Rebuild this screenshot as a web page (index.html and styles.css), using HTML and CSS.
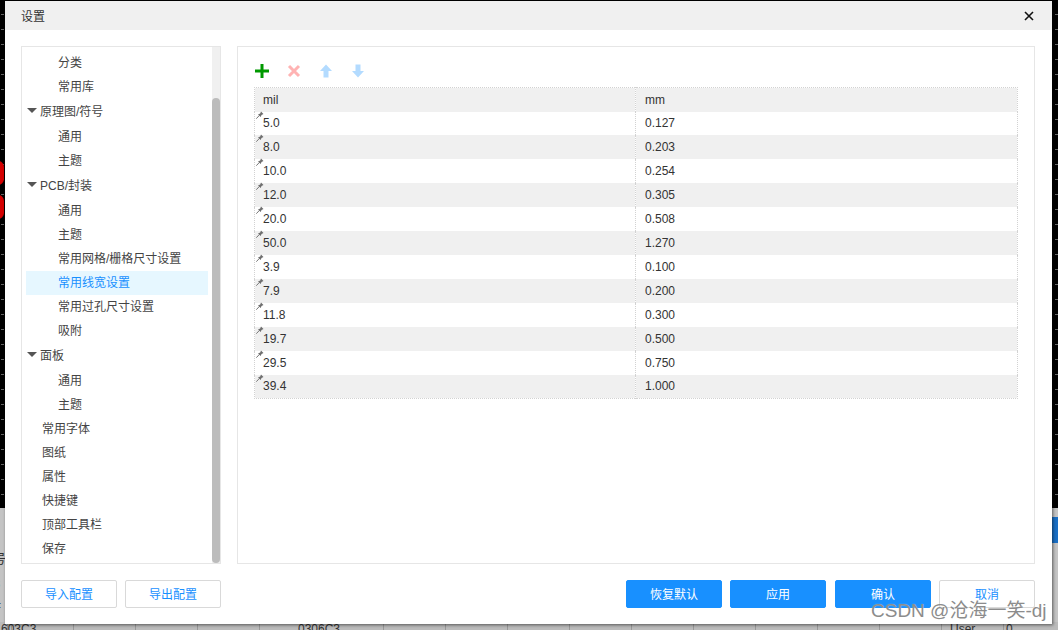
FILE: index.html
```html
<!DOCTYPE html>
<html lang="zh-CN">
<head>
<meta charset="utf-8">
<title>设置</title>
<link rel="stylesheet" href="styles.css">
</head>
<body>
<svg class="defs" width="0" height="0" aria-hidden="true">
  <symbol id="pin" viewBox="0 0 8 8">
    <path d="M0.3 7.7 L3.4 4.4" stroke="#777" stroke-width="1" fill="none"/>
    <path d="M2 3.4 L4.2 2.6 L5 0.6 L7.5 3 L5.5 3.9 L4.7 6 Z" fill="#6e6e6e"/>
  </symbol>
</svg>

<div class="backdrop">
  <div class="tick tick-l"></div>
  <div class="tick tick-r"></div>
  <div class="blob blob-a"></div>
  <div class="blob blob-b"></div>
  <div class="behind">
    <div class="blue-strip"></div>
    <div class="behind-left">
      <span>号</span><span class="behind-blue">8</span><span>F</span>
    </div>
    <div class="behind-bottom">
      <span class="bb-a">603C3</span><span class="bb-b">0306C3</span><span class="bb-c">User</span><span class="bb-d">0</span>
    </div>
  </div>
</div>

<div class="modal">
  <header class="modal-title">
    <span>设置</span>
    <svg class="close" width="10" height="10" viewBox="0 0 10 10"><path d="M1 1 L9 9 M9 1 L1 9" stroke="#111" stroke-width="1.6" fill="none"/></svg>
  </header>

  <div class="modal-body">
    <div class="panels">
      <nav class="tree-panel">
        <ul class="tree">
          <li class="lv2">分类</li>
          <li class="lv2">常用库</li>
          <li class="lv1"><i class="caret"></i>原理图/符号</li>
          <li class="lv2">通用</li>
          <li class="lv2">主题</li>
          <li class="lv1"><i class="caret"></i>PCB/封装</li>
          <li class="lv2">通用</li>
          <li class="lv2">主题</li>
          <li class="lv2">常用网格/栅格尺寸设置</li>
          <li class="lv2 active">常用线宽设置</li>
          <li class="lv2">常用过孔尺寸设置</li>
          <li class="lv2">吸附</li>
          <li class="lv1"><i class="caret"></i>面板</li>
          <li class="lv2">通用</li>
          <li class="lv2">主题</li>
          <li class="lv0">常用字体</li>
          <li class="lv0">图纸</li>
          <li class="lv0">属性</li>
          <li class="lv0">快捷键</li>
          <li class="lv0">顶部工具栏</li>
          <li class="lv0">保存</li>
        </ul>
        <div class="scrollbar"><div class="thumb"></div></div>
      </nav>

      <section class="content-panel">
        <div class="toolbar">
          <svg class="tool" width="16" height="16" viewBox="0 0 16 16"><path d="M8 1 V15 M1 8 H15" stroke="#090" stroke-width="3" fill="none"/></svg>
          <svg class="tool" width="16" height="16" viewBox="0 0 16 16"><path d="M3 3 L13 13 M13 3 L3 13" stroke="#ffb3b3" stroke-width="3" fill="none"/></svg>
          <svg class="tool" width="16" height="16" viewBox="0 0 16 16"><path d="M8 1.5 L14 8 H10.5 V14.5 H5.5 V8 H2 Z" fill="#b3dbff"/></svg>
          <svg class="tool" width="16" height="16" viewBox="0 0 16 16"><path d="M8 14.5 L14 8 H10.5 V1.5 H5.5 V8 H2 Z" fill="#b3dbff"/></svg>
        </div>
        <table class="grid">
          <thead><tr><th>mil</th><th>mm</th></tr></thead>
          <tbody>
            <tr><td><svg class="pin"><use href="#pin"/></svg>5.0</td><td>0.127</td></tr>
            <tr><td><svg class="pin"><use href="#pin"/></svg>8.0</td><td>0.203</td></tr>
            <tr><td><svg class="pin"><use href="#pin"/></svg>10.0</td><td>0.254</td></tr>
            <tr><td><svg class="pin"><use href="#pin"/></svg>12.0</td><td>0.305</td></tr>
            <tr><td><svg class="pin"><use href="#pin"/></svg>20.0</td><td>0.508</td></tr>
            <tr><td><svg class="pin"><use href="#pin"/></svg>50.0</td><td>1.270</td></tr>
            <tr><td><svg class="pin"><use href="#pin"/></svg>3.9</td><td>0.100</td></tr>
            <tr><td><svg class="pin"><use href="#pin"/></svg>7.9</td><td>0.200</td></tr>
            <tr><td><svg class="pin"><use href="#pin"/></svg>11.8</td><td>0.300</td></tr>
            <tr><td><svg class="pin"><use href="#pin"/></svg>19.7</td><td>0.500</td></tr>
            <tr><td><svg class="pin"><use href="#pin"/></svg>29.5</td><td>0.750</td></tr>
            <tr><td><svg class="pin"><use href="#pin"/></svg>39.4</td><td>1.000</td></tr>
          </tbody>
        </table>
      </section>
    </div>

    <footer class="actions">
      <div class="btn-group">
        <button class="btn">导入配置</button>
        <button class="btn">导出配置</button>
      </div>
      <div class="btn-group">
        <button class="btn primary">恢复默认</button>
        <button class="btn primary">应用</button>
        <button class="btn primary gap-extra">确认</button>
        <button class="btn">取消</button>
      </div>
    </footer>
  </div>

  <div class="wm wm-a">J7641 10.22.0.7 2022-08-22</div>
  <div class="wm wm-b">J7641 10.22.0.7 2022-08-22</div>
  <div class="wm wm-c">J7641 10.22.0.7 2022-08-22</div>
  <div class="wm wm-d">J7641 10.22.0.7 2022-08-22</div>
  <div class="wm wm-e">J7641 10.22.0.7 2022-08-22</div>
  <div class="wm wm-f">J7641 10.22.0.7 2022-08-22</div>
</div>

<div class="csdn">CSDN @沧海一笑-dj</div>
</body>
</html>
```

FILE: styles.css
```css
* { box-sizing: border-box; }

html, body {
  margin: 0;
  padding: 0;
  width: 1058px;
  height: 630px;
  overflow: hidden;
  background: #000;
  font-family: "Liberation Sans", "Noto Sans CJK SC", sans-serif;
  font-size: 12px;
  color: #444;
}

.defs { position: absolute; }

/* Application dimmed behind the dialog */
.backdrop { position: absolute; inset: 0; overflow: hidden; }

.tick { position: absolute; top: 0; height: 508px; width: 3px;
  background: repeating-linear-gradient(to bottom, transparent 0, transparent 14px, #666 14px, #666 15px); }
.tick-l { left: 1px; }
.tick-r { right: 0; }

.blob { position: absolute; left: -8px; width: 12px; background: #d40000; border-radius: 6px; }
.blob-a { top: 161px; height: 24px; }
.blob-b { top: 195px; height: 24px; }

.behind { position: absolute; left: 0; right: 0; top: 508px; bottom: 0; background: #c4c4c4; }

.blue-strip { position: absolute; right: 0; top: 9px; width: 6px; height: 26px; background: #1a6fc4; }

.behind-left { position: absolute; left: 0; top: 0; width: 5px; height: 122px;
  overflow: hidden; display: flex; flex-direction: column; gap: 9px;
  padding-top: 40px; font-size: 13px; color: #333; }
.behind-left span { display: block; margin-left: -7px; }
.behind-blue { color: #1a6fc4; }

.behind-bottom { position: absolute; left: 0; right: 0; top: 114px; height: 8px; background-color: #bbb;
  background-image: repeating-linear-gradient(to right, #999 0, #999 1px, transparent 1px, transparent 62px);
  background-position: 11px 0;
  overflow: hidden; font-size: 12px; color: #333; line-height: 14px; }
.behind-bottom span { position: absolute; top: 0; }
.bb-a { left: 1px; }
.bb-b { left: 298px; }
.bb-c { left: 950px; }
.bb-d { left: 1006px; }

/* Dialog */
.modal {
  position: absolute;
  left: 5px;
  top: 1px;
  width: 1047px;
  height: 623px;
  background: #fff;
  box-shadow: 1px 1px 3px rgba(0, 0, 0, .55);
  overflow: hidden;
}

.modal-title {
  height: 29px;
  background: #f0f0f0;
  display: flex;
  align-items: center;
  justify-content: space-between;
  padding: 0 18px 0 16px;
  font-size: 12px;
  color: #333;
}

.close { display: block; }

.modal-body { padding: 16px 17px 0 16px; }

.panels { display: flex; gap: 16px; height: 518px; }

.tree-panel {
  width: 200px;
  border: 1px solid #e6e6e6;
  display: flex;
  overflow: hidden;
}

.tree {
  list-style: none;
  margin: 0;
  padding: 4px 4px 0 4px;
  flex: 1;
  min-width: 0;
}

.tree li {
  height: 24px;
  line-height: 24px;
  white-space: nowrap;
  color: #444;
  display: flex;
  align-items: center;
}
.lv2 { padding-left: 32px; }
.tree li.lv1 { padding-left: 1px; height: 26px; }
.lv0 { padding-left: 16px; }
.tree li.active { background: #e6f7ff; color: #1890ff; }

.caret {
  width: 0;
  height: 0;
  border-left: 5px solid transparent;
  border-right: 5px solid transparent;
  border-top: 5px solid #555;
  margin: -3px 3px 0 0;
}

.scrollbar {
  width: 8px;
  background: #f0f0f0;
  padding-top: 51px;
  display: flex;
}
.thumb { flex: 1; background: #bcbcbc; border-radius: 4px; }

.content-panel {
  width: 798px;
  border: 1px solid #e6e6e6;
  padding: 16px 16px 0 16px;
}

.toolbar {
  display: flex;
  gap: 16px;
  height: 24px;
}
.tool { display: block; }

.grid {
  width: 764px;
  border-collapse: collapse;
  table-layout: fixed;
  border: 1px dotted #d2d2d2;
  font-size: 12px;
  color: #333;
}
.grid th, .grid td {
  padding: 1px 0 1px 9px;
  text-align: left;
  font-weight: normal;
  height: 24px;
  position: relative;
  border-left: 1px dotted #d2d2d2;
}
.grid th:first-child, .grid td:first-child { width: 381px; border-left: 0; padding-left: 8px; }
.grid th { background: #f0f0f0; height: 24px; padding: 0 0 0 9px; }
.grid tbody tr:nth-child(even) td { background: #f0f0f0; }
.grid tbody tr:first-child td { height: 23px; }

.pin { position: absolute; left: 1px; top: -1px; width: 8px; height: 8px; }

.actions {
  display: flex;
  justify-content: space-between;
  margin-top: 16px;
}
.btn-group { display: flex; gap: 8px; }

.btn {
  width: 96px;
  height: 28px;
  padding: 0 0 1px;
  background: #fff;
  border: 1px solid #d9d9d9;
  border-radius: 2px;
  color: #1890ff;
  font-family: inherit;
  font-size: 12px;
}
.btn.primary { background: #1890ff; border-color: #1890ff; color: #fff; }
.gap-extra { margin-left: 1px; }

/* Faint tiled watermark */
.wm {
  position: absolute;
  font-family: "Liberation Serif", serif;
  font-size: 16px;
  line-height: 18px;
  letter-spacing: 3px;
  white-space: nowrap;
  color: rgba(0, 0, 0, .018);
  transform: rotate(-48deg);
  transform-origin: left bottom;
  pointer-events: none;
}
.wm-a { left: 180px; top: 111px; }
.wm-b { left: 25px; top: 609px; }
.wm-c { left: 360px; top: 281px; }
.wm-d { left: 525px; top: 456px; }
.wm-e { left: 870px; top: 111px; }
.wm-f { left: 700px; top: 606px; }

.csdn {
  position: absolute;
  left: 871px;
  top: 600px;
  font-size: 19px;
  line-height: 22px;
  white-space: nowrap;
  color: #8c8c8c;
  text-shadow: 0 0 1px rgba(255, 255, 255, .6);
}
```
